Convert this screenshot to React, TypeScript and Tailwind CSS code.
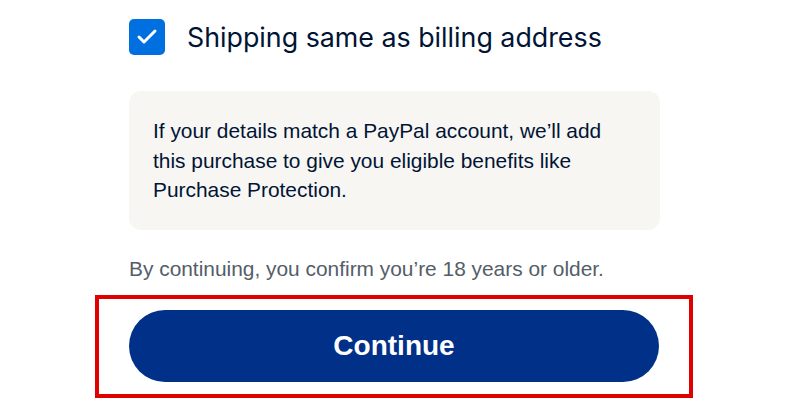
import { Check } from 'lucide-react'

export default function App() {
  return (
    <div className="min-h-screen w-full bg-white">
      <div className="ml-[129px] w-[531px] pt-[19px]">
        <label className="flex items-center gap-[22px]">
          <span className="flex h-[36px] w-[36px] items-center justify-center rounded-[5px] bg-[#0070e0]">
            <Check className="h-[24px] w-[24px] text-white" strokeWidth={3} />
          </span>
          <span
            className="text-[26.8px] leading-[36px] text-[#001435]"
            style={{ fontFamily: 'Inter, "Noto Sans", sans-serif' }}
          >
            Shipping same as billing address
          </span>
        </label>

        <div
          className="mt-[36px] rounded-[12px] bg-[#f8f6f3] px-[24px] pb-[25px] pt-[25px] text-[20.9px] leading-[29.5px] text-[#001435]"
          style={{ fontFamily: '"Liberation Sans", Arial, sans-serif' }}
        >
          If your details match a PayPal account, we’ll add
          <br />
          this purchase to give you eligible benefits like
          <br />
          Purchase Protection.
        </div>

        <p
          className="mt-[25px] text-[20.9px] leading-[28px] text-[#545d68]"
          style={{ fontFamily: '"Liberation Sans", Arial, sans-serif' }}
        >
          By continuing, you confirm you’re 18 years or older.
        </p>
      </div>

      <div className="ml-[95px] mt-[12px] w-[598px] border-[4px] border-[#e00000] px-[30px] pb-[12px] pt-[11px]">
        <button
          className="flex h-[72px] w-full items-center justify-center rounded-full bg-[#003087] text-[28px] font-bold text-white"
          style={{ fontFamily: '"Liberation Sans", Arial, sans-serif' }}
        >
          Continue
        </button>
      </div>
    </div>
  )
}
